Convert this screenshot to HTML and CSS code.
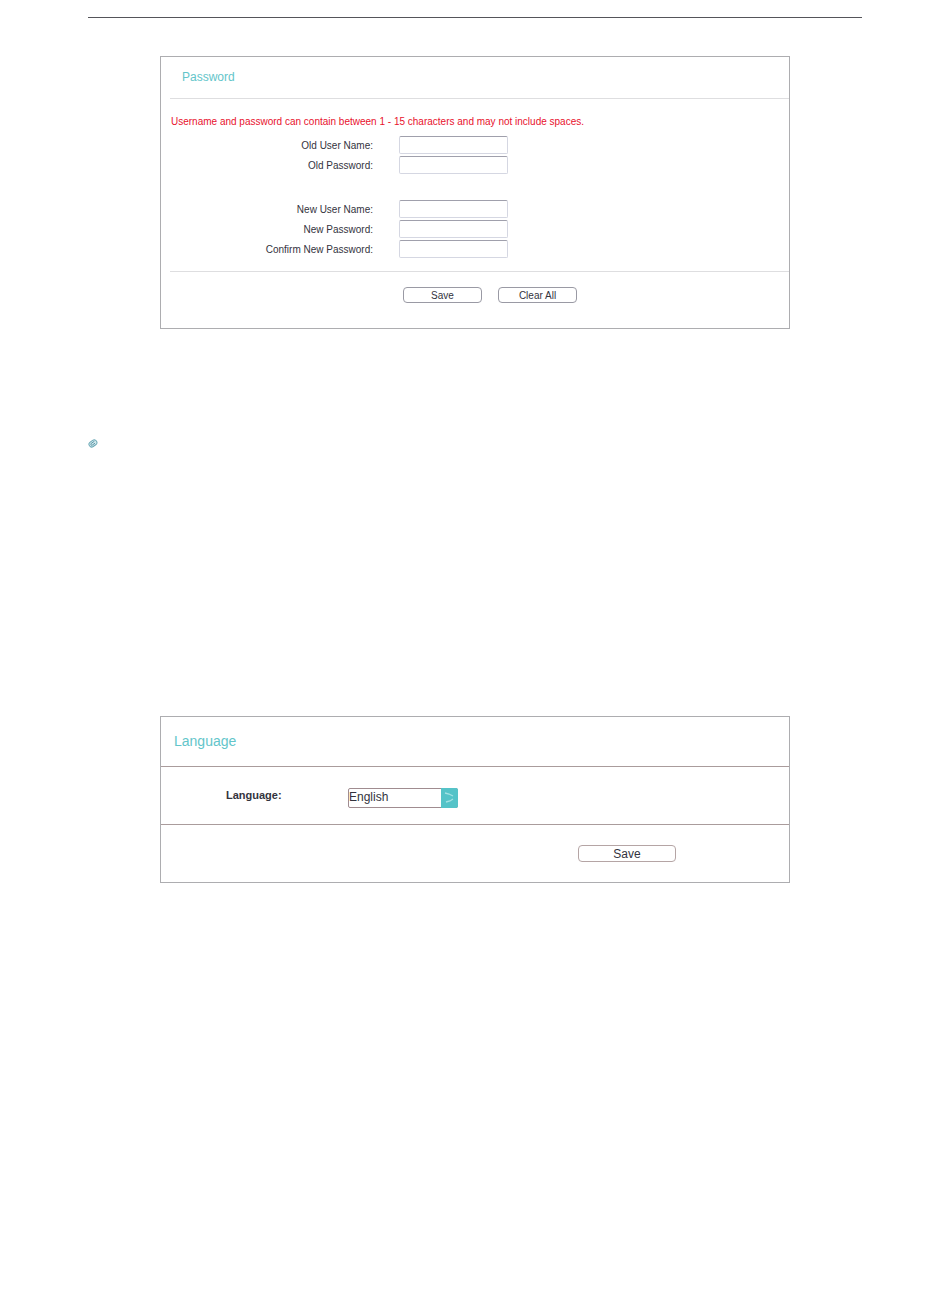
FILE: index.html
```
<!DOCTYPE html>
<html lang="en">
<head>
    <meta charset="UTF-8">
    <meta name="viewport" content="width=device-width, initial-scale=1.0">
    <title>Password and Language</title>
    <link rel="stylesheet" href="styles.css">
</head>
<body>
    <main class="page">
        <form class="panel password-panel">
            <h2>Password</h2>
            <div class="password-body">
                <p class="warning">Username and password can contain between 1 - 15 characters and may not include spaces.</p>
                <div class="fields">
                    <label for="old-user">Old User Name:</label>
                    <input type="text" id="old-user">
                    <label for="old-password">Old Password:</label>
                    <input type="password" id="old-password">
                </div>
                <div class="fields">
                    <label for="new-user">New User Name:</label>
                    <input type="text" id="new-user">
                    <label for="new-password">New Password:</label>
                    <input type="password" id="new-password">
                    <label for="confirm-password">Confirm New Password:</label>
                    <input type="password" id="confirm-password">
                </div>
            </div>
            <div class="actions">
                <button type="button">Save</button>
                <button type="reset">Clear All</button>
            </div>
        </form>

        <div class="note">
            <svg class="note-icon" viewBox="0 0 10 8" aria-hidden="true">
                <g transform="rotate(-35 5 4)" fill="none" stroke="#6ba8b6">
                    <rect x="0.8" y="1.2" width="8.4" height="5.4" rx="2.7" fill="#d3e8ec" stroke-width="1"/>
                    <path d="M7.5 2.9H3.6a1 1 0 0 0 0 2h3.2" stroke="#4a8ea0" stroke-width="0.8"/>
                </g>
            </svg>
        </div>

        <form class="panel language-panel">
            <h2>Language</h2>
            <div class="language-row">
                <label for="language">Language:</label>
                <div class="select-box">
                    <select id="language">
                        <option>English</option>
                    </select>
                    <svg class="select-arrow" viewBox="0 0 17 20" aria-hidden="true">
                        <path d="M0 0h15a2 2 0 0 1 2 2v16a2 2 0 0 1-2 2H0z" fill="#55c3c8"/>
                        <path d="M4 5l4 1 4 2M5 14l4-1 3-2" fill="none" stroke="#a5e2e3" stroke-width="1.3"/>
                    </svg>
                </div>
            </div>
            <div class="actions">
                <button type="button">Save</button>
            </div>
        </form>
    </main>
</body>
</html>
```

FILE: styles.css
```
* {
    box-sizing: border-box;
}
body {
    margin: 0;
    background-color: #fff;
    color: #33333d;
    font-family: "Liberation Sans", Arial, sans-serif;
    font-size: 10px;
}
.page {
    margin: 17px 88px 0;
    border-top: 1px solid #55555a;
    padding: 38px 72px;
}
.panel {
    border: 1px solid #adadb0;
}
h2 {
    margin: 0;
    color: #63c5ca;
    font-size: 12px;
    font-weight: normal;
}
button {
    border: 1px solid #9a9aa4;
    border-radius: 4px;
    padding: 0;
    background-color: #fff;
    color: #33333d;
    font-family: inherit;
    font-size: 10px;
    cursor: pointer;
}
.password-panel {
    padding-left: 9px;
}
.password-panel h2 {
    padding-left: 12px;
    line-height: 41px;
}
.password-body {
    border-top: 1px solid #dedee0;
    border-bottom: 1px solid #dedee0;
    padding: 16px 0 13px;
}
.warning {
    margin: 0 0 7px;
    padding-left: 1px;
    color: #e8112d;
    line-height: 14px;
}
.fields {
    display: grid;
    grid-template-columns: 203px 109px;
    column-gap: 26px;
    row-gap: 2px;
}
.fields + .fields {
    margin-top: 26px;
}
.fields label {
    line-height: 20px;
    height: 18px;
    text-align: right;
}
.fields input {
    width: 100%;
    height: 18px;
    border: 1px solid #d5d7e2;
    border-top-color: #a0a0ac;
    border-radius: 2px;
    padding: 0 3px;
    font: inherit;
}
.password-panel .actions {
    display: flex;
    gap: 16px;
    padding: 15px 0 25px 233px;
}
.password-panel button {
    width: 79px;
    height: 16px;
}
.note {
    padding: 110px 0 268px;
    margin-left: -72px;
}
.note-icon {
    display: block;
    width: 10px;
    height: 9px;
}
.language-panel h2 {
    padding-left: 13px;
    font-size: 14px;
    line-height: 49px;
}
.language-row {
    display: flex;
    border-top: 1px solid #aa9c9c;
    border-bottom: 1px solid #aa9c9c;
    padding: 21px 0 16px 65px;
}
.language-row label {
    width: 122px;
    font-size: 11px;
    font-weight: bold;
    line-height: 14px;
}
.select-box {
    position: relative;
    width: 110px;
}
.select-box select {
    display: block;
    width: 100%;
    height: 20px;
    border: 1px solid #a08c90;
    border-radius: 2px;
    padding: 0 0 2px;
    background-color: #fff;
    color: #33333d;
    font-family: inherit;
    font-size: 12px;
    appearance: none;
}
.select-arrow {
    position: absolute;
    top: 0;
    right: 0;
    width: 17px;
    height: 20px;
    pointer-events: none;
}
.language-panel .actions {
    display: flex;
    justify-content: flex-end;
    padding: 20px 113px 20px 0;
}
.language-panel button {
    width: 98px;
    height: 17px;
    border-color: #b5a5a5;
    font-size: 12px;
    line-height: 14px;
}
```
